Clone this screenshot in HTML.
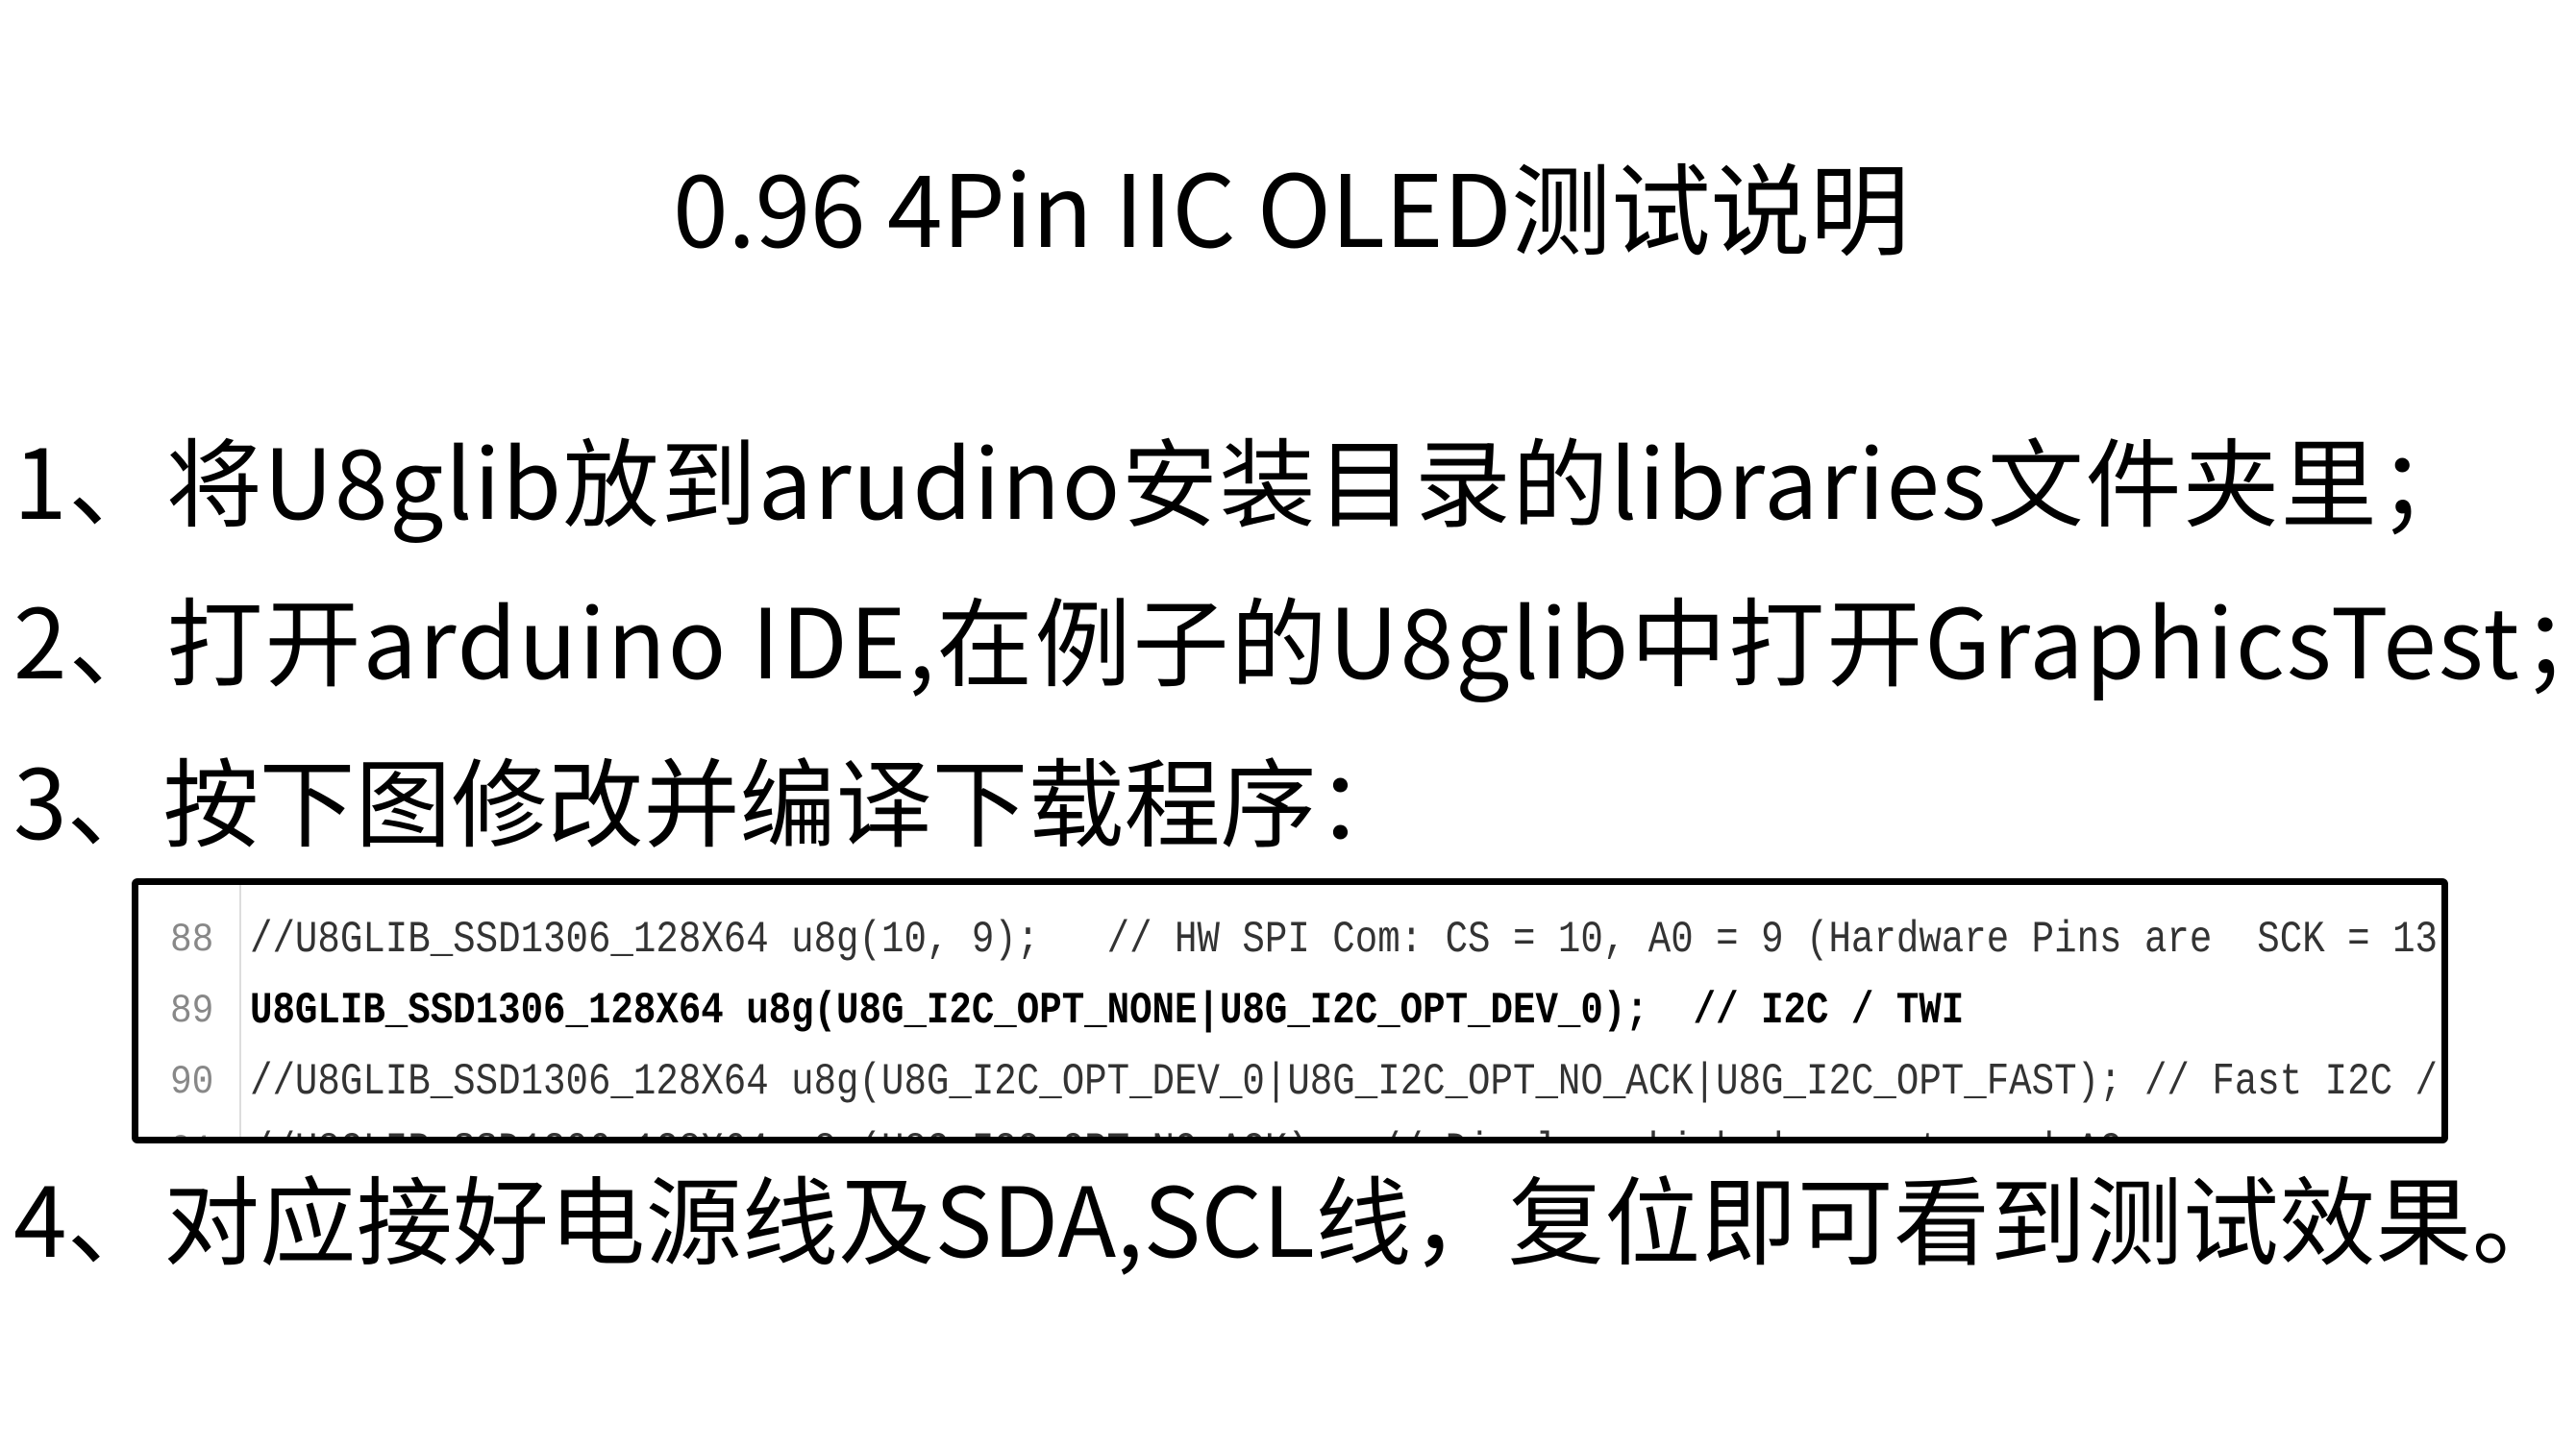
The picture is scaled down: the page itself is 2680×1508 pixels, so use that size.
<!DOCTYPE html>
<html><head><meta charset="utf-8"><style>
body{margin:0;width:2680px;height:1508px;background:#fff;position:relative;overflow:hidden;font-family:"Liberation Sans","Noto Sans CJK SC",sans-serif;color:#000}
.t{position:absolute;white-space:nowrap;line-height:1;font-family:"Noto Sans CJK SC",sans-serif;font-weight:400}
.box{position:absolute;left:137px;top:914px;width:2396px;height:262px;border:7px solid #000;border-radius:6px;overflow:hidden;background:#fff}
.sep{position:absolute;left:105px;top:0;width:2px;height:100%;background:#ddd}
.c{position:absolute;white-space:pre;font-family:"Liberation Mono",monospace;font-size:46px;line-height:1;color:#333;transform-origin:0 0;transform:scaleX(0.85)}
.n{position:absolute;font-family:"Liberation Mono",monospace;font-size:42px;color:#888;line-height:1;left:33px;transform-origin:0 0;transform:scaleX(0.9)}
</style></head><body>
<div class="t" style="left:700px;top:160px;font-size:104px;letter-spacing:-0.5px">0.96 4Pin IIC OLED测试说明</div>
<div class="t" style="left:14px;top:447px;font-size:100px;letter-spacing:1.6px">1、将U8glib放到arudino安装目录的libraries文件夹里；</div>
<div class="t" style="left:14px;top:613px;font-size:100px;letter-spacing:2px">2、打开arduino IDE,在例子的U8glib中打开GraphicsTest；</div>
<div class="t" style="left:14px;top:780px;font-size:100px">3、按下图修改并编译下载程序：</div>
<div class="box">
<div class="sep"></div>
<div class="n" style="top:36px">88</div>
<div class="n" style="top:110px">89</div>
<div class="n" style="top:184px">90</div>
<div class="n" style="top:256px">91</div>
<div class="c" style="left:116px;top:34px">//U8GLIB_SSD1306_128X64 u8g(10, 9);   // HW SPI Com: CS = 10, A0 = 9 (Hardware Pins are  SCK = 13</div>
<div class="c" style="left:116px;top:108px;color:#000;font-weight:bold">U8GLIB_SSD1306_128X64 u8g(U8G_I2C_OPT_NONE|U8G_I2C_OPT_DEV_0);  // I2C / TWI</div>
<div class="c" style="left:116px;top:182px">//U8GLIB_SSD1306_128X64 u8g(U8G_I2C_OPT_DEV_0|U8G_I2C_OPT_NO_ACK|U8G_I2C_OPT_FAST); // Fast I2C /</div>
<div class="c" style="left:116px;top:254px">//U8GLIB_SSD1306_128X64 u8g(U8G_I2C_OPT_NO_ACK);  // Display which does not send AC</div>
</div>
<div class="t" style="left:14px;top:1215px;font-size:100px;letter-spacing:0.3px">4、对应接好电源线及SDA,SCL线，复位即可看到测试效果。</div>
</body></html>
